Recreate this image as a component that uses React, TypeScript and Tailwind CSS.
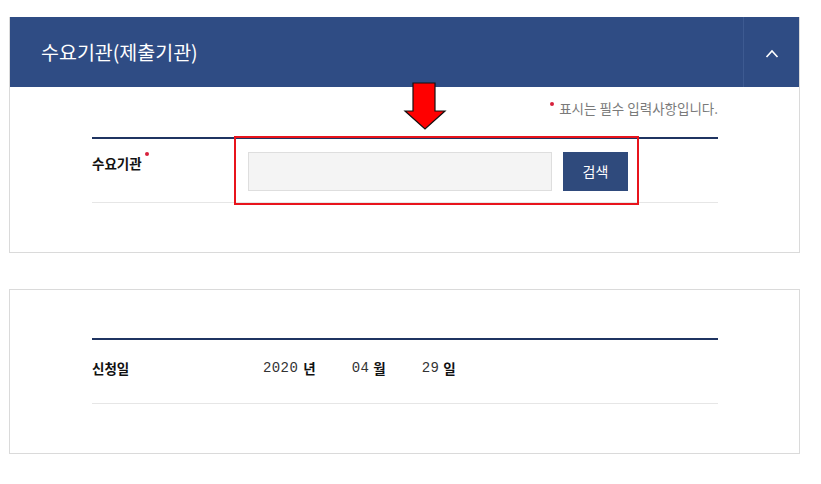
import React from 'react';

const KR = "font-['Noto_Sans_CJK_KR','Noto_Sans',sans-serif]";

const DownArrow: React.FC = () => (
  <svg
    className="absolute left-[403px] top-[82px]"
    width="44"
    height="49"
    viewBox="0 0 44 49"
  >
    <polygon
      points="10,1 32,1 32,29 42,29 22,47 2,29 10,29"
      fill="#ff0000"
      stroke="#111"
      strokeWidth="1.2"
      strokeLinejoin="miter"
    />
  </svg>
);

const ReqDot: React.FC<{ className?: string }> = ({ className }) => (
  <span className={`inline-block w-[4px] h-[4px] rounded-full bg-[#d7213b] ${className ?? ''}`} />
);

const App: React.FC = () => {
  return (
    <div className={`relative w-[821px] h-[484px] bg-white pt-[17px] ${KR}`}>
      {/* panel 1 */}
      <section className="ml-[9px] w-[791px] border border-[#dadada] border-t-0">
        <div className="flex h-[70px] bg-[#2f4c84]">
          <h2 className="flex-1 flex items-center pl-[31px] text-[19.5px] text-white">
            수요기관(제출기관)
          </h2>
          <div className="w-[56px] flex items-center justify-center border-l border-[#3d5a91]">
            <svg width="14" height="9" viewBox="0 0 14 9" className="mt-[2px]">
              <polyline points="1.5,8 7,2 12.5,8" fill="none" stroke="#fff" strokeWidth="1.6" />
            </svg>
          </div>
        </div>

        <div className="relative pl-[82px] pr-[81px] pt-[11px] pb-[49px]">
          <p className="flex justify-end items-start h-[39px] text-[13.5px] text-[#7a7a7a]">
            <ReqDot className="mt-[4px] mr-[5px]" />
            <span className="leading-[20px]">표시는 필수 입력사항입니다.</span>
          </p>
          <div className="border-t-2 border-[#1f3461]" />
          <div className="flex h-[64px] border-b border-[#e6e6e6]">
            <div className="w-[156px] pt-[15px] flex items-start text-[13.5px] font-bold text-[#111] leading-[18px]">
              수요기관
              <ReqDot className="ml-[3px] mt-[-2px]" />
            </div>
            <div className="flex pt-[13px] gap-[11px]">
              <input
                className="w-[304px] h-[39px] bg-[#f4f4f4] border border-[#dedede] outline-none"
                aria-label="수요기관"
              />
              <button className="w-[65px] h-[39px] bg-[#2f4a7c] text-white text-[14px]">검색</button>
            </div>
          </div>

          {/* annotation box */}
          <div className="absolute left-[224px] top-[49px] w-[405px] h-[69px] border-2 border-[#e8141c]" />
        </div>
      </section>

      {/* panel 2 */}
      <section className="ml-[9px] mt-[36px] w-[791px] border border-[#dadada] pl-[82px] pr-[81px] pt-[48px] pb-[49px]">
        <div className="border-t-2 border-[#1f3461]" />
        <div className="flex items-center h-[64px] pb-[6px] border-b border-[#e6e6e6] text-[13.5px] text-[#111]">
          <div className="w-[171px] font-bold">신청일</div>
          <div className="flex items-center">
            <span className="font-['Liberation_Mono',monospace] text-[14px] text-[#333] tracking-[0.4px]">2020</span>
            <span className="ml-[5px] font-bold">년</span>
            <span className="ml-[36px] font-['Liberation_Mono',monospace] text-[14px] text-[#333] tracking-[0.4px]">04</span>
            <span className="ml-[4px] font-bold">월</span>
            <span className="ml-[36px] font-['Liberation_Mono',monospace] text-[14px] text-[#333] tracking-[0.4px]">29</span>
            <span className="ml-[4px] font-bold">일</span>
          </div>
        </div>
      </section>

      <DownArrow />
    </div>
  );
};

export default App;
